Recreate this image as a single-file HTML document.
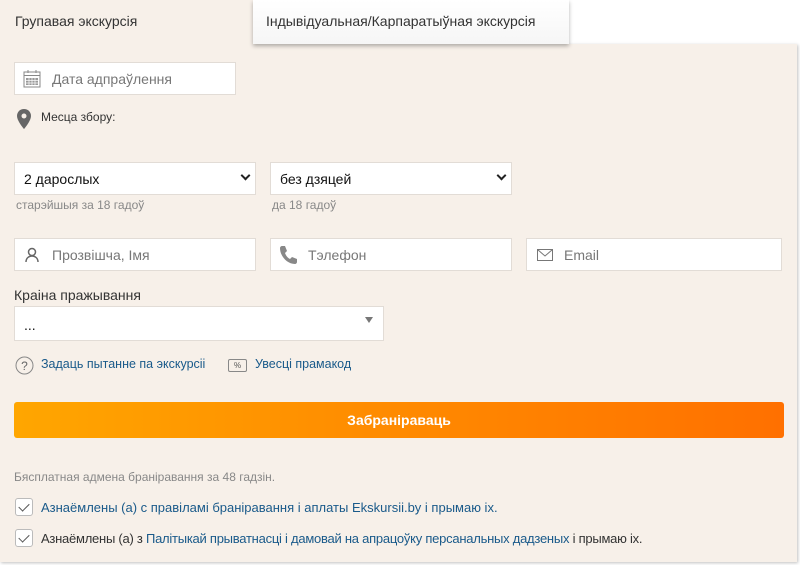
<!DOCTYPE html>
<html><head><meta charset="utf-8"><style>
*{box-sizing:border-box;margin:0;padding:0}
body{width:800px;height:565px;background:#fff;font-family:"Liberation Sans",sans-serif;position:relative;overflow:hidden;color:#333}
.panel{position:absolute;left:0;top:44px;width:797px;height:518px;background:#f7f0e9;box-shadow:1px 1px 3px rgba(0,0,0,.25)}
.tab1{position:absolute;left:0;top:0;width:253px;height:50px;background:#f7f0e9;font-size:14px;padding:13px 0 0 15px;color:#333}
.tab2{position:absolute;left:253px;top:0;width:316px;height:44px;background:linear-gradient(#fff,#f6f6f6);box-shadow:0 2px 4px rgba(0,0,0,.3);font-size:14px;padding:13px 0 0 13px;color:#333}
.a{position:absolute}
.inp{position:absolute;background:#fff;border:1px solid #e2dcd6;height:33px;font-size:14px;color:#777;padding-top:8px}
.sel{color:#111;padding-left:9px}
.hint{position:absolute;font-size:12px;color:#888}
.chev{position:absolute;right:6px;top:9px;width:7px;height:7px;border-right:2px solid #222;border-bottom:2px solid #222;transform:rotate(45deg)}
.link{color:#1a5a8a}
.cb{position:absolute;left:15px;width:18px;height:18px;border:1px solid #bbb;border-radius:3px;background:#fff}
.cb:after{content:"";position:absolute;left:5px;top:2px;width:5px;height:9px;border-right:1px solid #555;border-bottom:1px solid #555;transform:rotate(45deg)}
</style></head><body>
<div class="panel"></div>
<div class="tab1">Групавая экскурсія</div>
<div class="tab2">Індывідуальная/Карпаратыўная экскурсія</div>

<div class="inp" style="left:14px;top:62px;width:222px;padding-left:37px">Дата адпраўлення
<svg class="a" style="left:8px;top:6px" width="18" height="19" viewBox="0 0 18 19"><rect x="1" y="3" width="16" height="15" fill="none" stroke="#888"/><line x1="1" y1="6.5" x2="17" y2="6.5" stroke="#888"/><line x1="5" y1="1" x2="5" y2="4" stroke="#888"/><line x1="13" y1="1" x2="13" y2="4" stroke="#888"/><g fill="#999"><rect x="3" y="9" width="12" height="7"/></g><g stroke="#fff" stroke-width=".7"><line x1="3" y1="11.5" x2="15" y2="11.5"/><line x1="3" y1="14" x2="15" y2="14"/><line x1="6" y1="9" x2="6" y2="16"/><line x1="9" y1="9" x2="9" y2="16"/><line x1="12" y1="9" x2="12" y2="16"/></g></svg></div>

<svg class="a" style="left:17px;top:109px" width="14" height="20" viewBox="0 0 14 20"><path d="M7 0C3 0 0 3 0 7c0 5 7 13 7 13s7-8 7-13c0-4-3-7-7-7z" fill="#666"/><circle cx="7" cy="7" r="2.5" fill="#f7f0e9"/></svg>
<div class="a" style="left:41px;top:110px;font-size:12px;color:#333">Месца збору:</div>

<div class="inp sel" style="left:14px;top:162px;width:242px">2 дарослых<span class="chev"></span></div>
<div class="inp sel" style="left:270px;top:162px;width:242px">без дзяцей<span class="chev"></span></div>
<div class="hint" style="left:16px;top:198px">старэйшыя за 18 гадоў</div>
<div class="hint" style="left:272px;top:198px">да 18 гадоў</div>

<div class="inp" style="left:14px;top:238px;width:242px;padding-left:37px">Прозвішча, Імя
<svg class="a" style="left:10px;top:8px" width="14" height="16" viewBox="0 0 14 16"><circle cx="7" cy="5" r="3.5" fill="none" stroke="#666" stroke-width="1.5"/><path d="M1 15c0-4 3-6 6-6s6 2 6 6" fill="none" stroke="#666" stroke-width="1.5"/></svg></div>
<div class="inp" style="left:270px;top:238px;width:242px;padding-left:37px">Тэлефон
<svg class="a" style="left:8px;top:6px" width="18" height="20" viewBox="0 0 18 20"><path d="M3 1l3 0 2 5-2 2c1 3 3 5 5 6l2-2 5 2v3c0 1-1 2-2 2C8 19 1 11 1 3c0-1 1-2 2-2z" fill="#888"/></svg></div>
<div class="inp" style="left:526px;top:238px;width:256px;padding-left:37px">Email
<svg class="a" style="left:10px;top:10px" width="16" height="12" viewBox="0 0 16 12"><rect x=".5" y=".5" width="15" height="11" fill="none" stroke="#777"/><path d="M.5 .5L8 7l7.5-6.5" fill="none" stroke="#777"/></svg></div>

<div class="a" style="left:14px;top:287px;font-size:14px;color:#333">Краіна пражывання</div>
<div class="inp sel" style="left:14px;top:306px;width:370px;height:35px;padding-top:10px">...
<span class="a" style="right:10px;top:10px;border:4px solid transparent;border-top:6px solid #777"></span></div>

<svg class="a" style="left:15px;top:356px" width="19" height="19"><circle cx="9.5" cy="9.5" r="8.5" fill="none" stroke="#888"/><text x="9.5" y="14" font-size="12" text-anchor="middle" fill="#666" font-family="Liberation Sans">?</text></svg>
<div class="a link" style="left:41px;top:357px;font-size:12.5px">Задаць пытанне па экскурсіі</div>
<div class="a" style="left:228px;top:359px;width:19px;height:13px;border:1px solid #888;border-radius:2px;font-size:8px;text-align:center;line-height:11px;color:#555">%</div>
<div class="a link" style="left:255px;top:357px;font-size:12.5px">Увесці прамакод</div>

<div class="a" style="left:14px;top:402px;width:770px;height:36px;border-radius:3px;background:linear-gradient(90deg,#ffa600,#ff8a00 50%,#ff7000);color:#fff;font-size:14px;font-weight:bold;text-align:center;line-height:36px">Забраніраваць</div>

<div class="hint" style="left:14px;top:470px;font-size:12px;color:#888">Бясплатная адмена браніравання за 48 гадзін.</div>
<div class="cb" style="top:498px"></div>
<div class="a link" style="left:41px;top:500px;font-size:13px">Азнаёмлены (а) с правіламі браніравання і аплаты Ekskursii.by і прымаю іх.</div>
<div class="cb" style="top:529px"></div>
<div class="a" style="left:41px;top:531px;font-size:13px;color:#333;letter-spacing:-0.25px">Азнаёмлены (а) з <span class="link">Палітыкай прыватнасці і дамовай на апрацоўку персанальных дадзеных</span> і прымаю іх.</div>
</body></html>
